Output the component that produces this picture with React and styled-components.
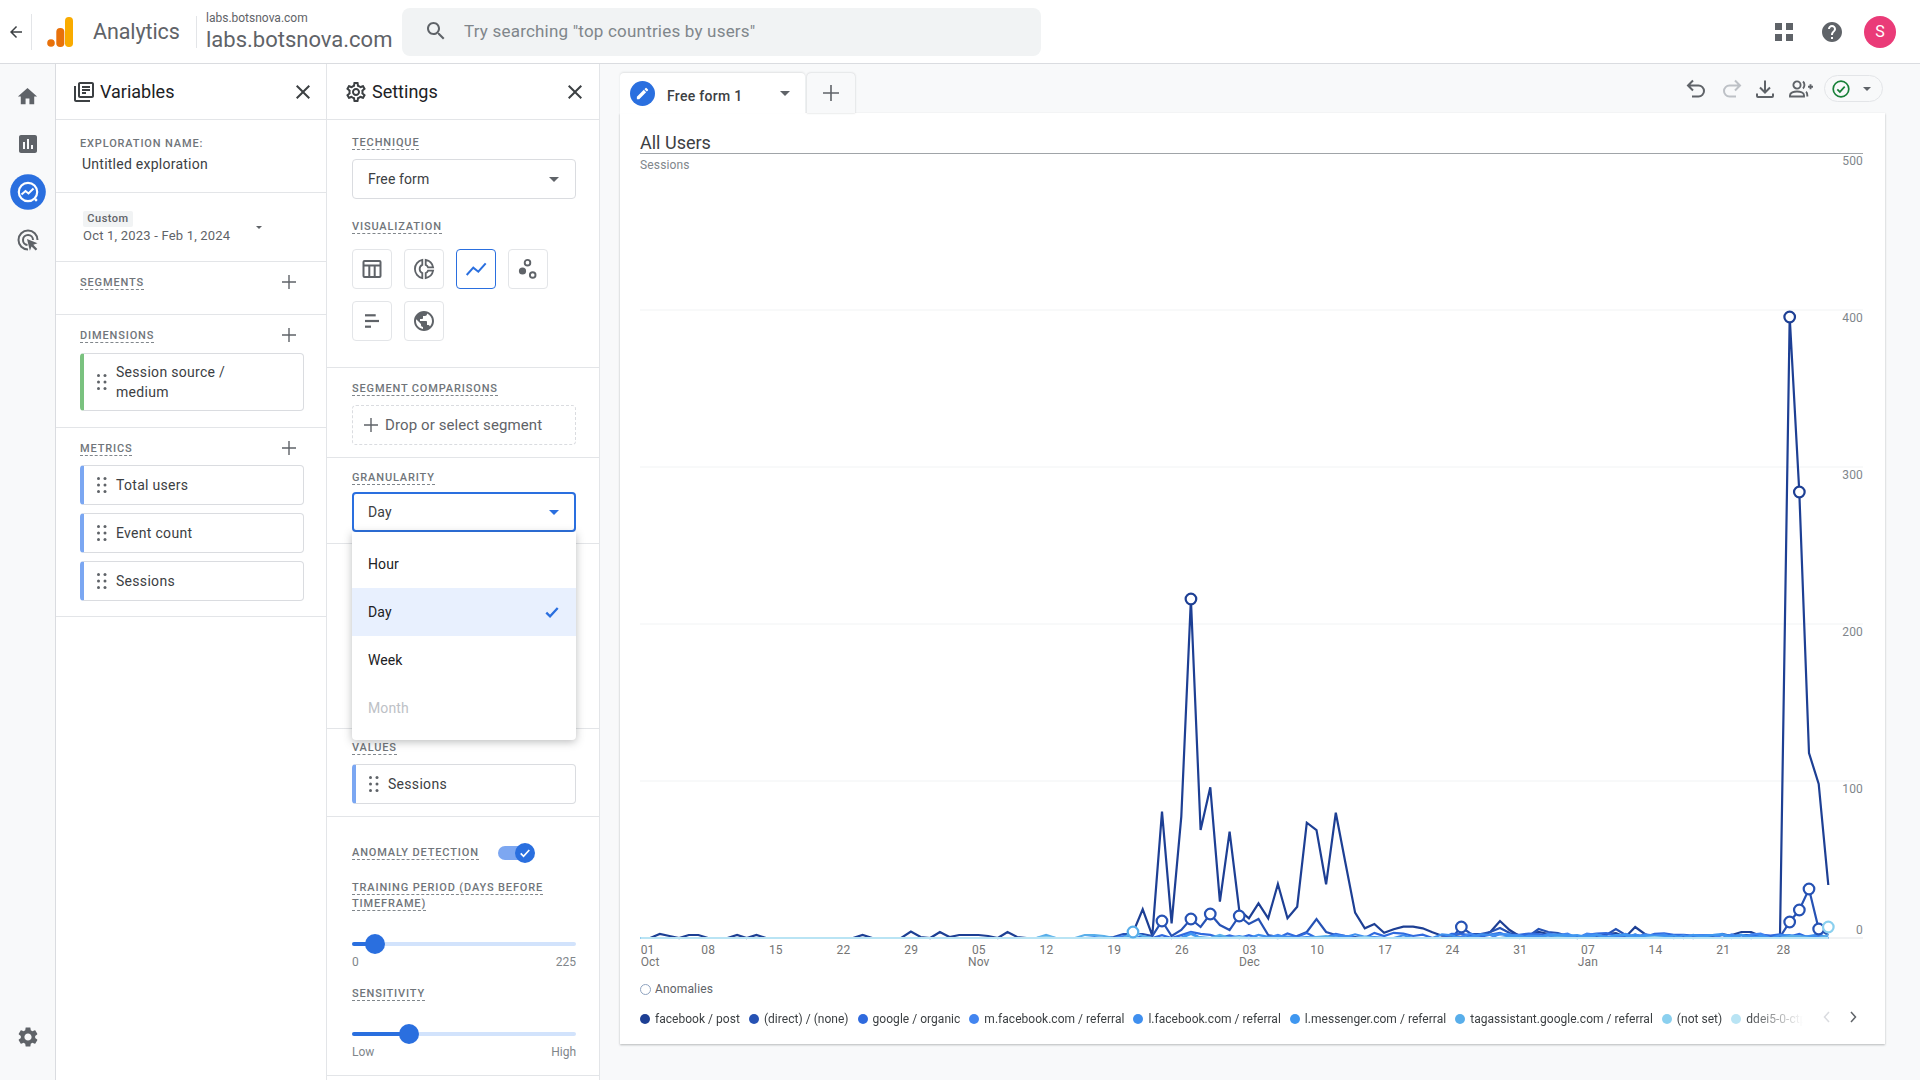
import React from "react";
import styled, { createGlobalStyle } from "styled-components";

const BLUE = "#2a6fdf";
const LINE = "#e3e5e8";
const GREY = "#5f6368";

const Global = createGlobalStyle`
  html, body { margin: 0; padding: 0; width: 1920px; height: 1080px; overflow: hidden; background: #f8f9fa; }
  body { font-family: Roboto, "Noto Sans", Arial, sans-serif; color: #3c4043; }
  * { box-sizing: border-box; }
`;

const Page = styled.div`display: flex; flex-direction: column; width: 1920px; height: 1080px;`;

/* ---------- header ---------- */
const Header = styled.header`
  display: flex; align-items: center; height: 64px; padding: 0 24px 0 7px;
  background: #fff; border-bottom: 1px solid #dadce0; flex: none;
`;
const BackSlot = styled.div`display: flex; width: 18px; height: 18px; color: #3c4043;`;
const VRule = styled.div`width: 1px; height: ${p => p.$h}px; background: #e3e5e8; margin-left: ${p => p.$ml}px;`;
const LogoSlot = styled.div`display: flex; margin-left: 15px; width: 26px; height: 30px;`;
const BrandText = styled.div`margin-left: 20px; width: 103px; font-size: 21.5px; color: ${GREY}; letter-spacing: -.1px; line-height: 28px; padding-top: 1px;`;
const DomainCol = styled.div`display: flex; flex-direction: column; margin-left: 9px; width: 196px; height: 48px; justify-content: center; padding-top: 2px;`;
const DomainSmall = styled.div`font-size: 12px; line-height: 14px; color: ${GREY};`;
const DomainBig = styled.div`font-size: 22px; line-height: 28px; color: ${GREY}; margin-top: 1px; white-space: nowrap;`;
const Search = styled.div`
  display: flex; align-items: center; width: 639px; height: 48px; background: #f1f3f4; border-radius: 8px;
  padding: 0 0 2px 22px; color: #80868b; font-size: 17px; letter-spacing: .2px;
`;
const SearchIcon = styled.svg`width: 24px; height: 24px; fill: ${GREY}; margin-right: 16px;`;
const HeadActions = styled.div`display: flex; align-items: center; margin-left: auto;`;
const Apps = styled.svg`width: 18px; height: 18px; fill: ${GREY};`;
const Help = styled.svg`width: 24px; height: 24px; fill: ${GREY}; margin-left: 27px;`;
const Avatar = styled.div`
  width: 32px; height: 32px; border-radius: 50%; background: #ea3b78; color: #fff; margin-left: 20px;
  display: flex; align-items: center; justify-content: center; font-size: 16px;
`;

/* ---------- shell ---------- */
const Shell = styled.div`display: flex; flex: 1; min-height: 0;`;
const Rail = styled.nav`
  width: 56px; flex: none; display: flex; flex-direction: column; padding: 8px 0 19px; border-right: 1px solid #dadce0; background: #f8f9fa;
`;
const RailItem = styled.div`height: 48px; display: flex; align-items: center; justify-content: center; margin-top: ${p => p.$bottom ? "auto" : 0};`;
const MatIcon = styled.svg`width: ${p => p.$s || 24}px; height: ${p => p.$s || 24}px; fill: ${p => p.$c || GREY}; flex: none;`;
const StrokeIcon = styled.svg`width: ${p => p.$s || 24}px; height: ${p => p.$s || 24}px; fill: none; stroke: ${p => p.$c || GREY}; stroke-width: ${p => p.$w || 2}; flex: none;`;

const Panel = styled.aside`
  width: ${p => p.$w}px; flex: none; background: #fff; border-right: 1px solid ${LINE}; display: flex; flex-direction: column;
`;
const PanelHead = styled.div`
  height: 56px; display: flex; align-items: center; padding: 0 ${p => p.$pr}px 0 ${p => p.$pl}px; gap: ${p => p.$gap}px;
  border-bottom: 1px solid ${LINE}; font-size: 18px; color: #202124; flex: none;
`;
const PanelTitle = styled.div`flex: 1;`;

const Section = styled.section`
  padding: ${p => p.$pt}px 23px ${p => p.$pb}px ${p => p.$pl ?? 25}px; flex: none; position: relative;
  border-bottom: 1px solid ${LINE};
`;
const Spacer = styled.div`height: ${p => p.$h}px; border-bottom: 1px solid ${LINE}; flex: none;`;

const LabelBlock = styled.div`
  font-size: 11px; line-height: 16px; font-weight: 500; letter-spacing: .85px; color: #70757a; text-transform: uppercase;
  margin-top: ${p => p.$mt || 0}px; position: relative; top: 1px;
`;
const LabelText = styled.span`padding-bottom: 0; border-bottom: 1px dashed #80868b;`;
const Label = ({ children, mt }) => <LabelBlock $mt={mt}><LabelText>{children}</LabelText></LabelBlock>;

const PlainLabel = styled.div`font-size: 11px; line-height: 14px; font-weight: 500; letter-spacing: .85px; color: #70757a;`;
const NameValue = styled.div`font-size: 14px; line-height: 16px; color: #3c4043; letter-spacing: .25px; margin: 5px 0 0 2px;`;

const DateRow = styled.div`display: flex; align-items: center; margin-left: 3px;`;
const DateBlock = styled.div`width: 173px;`;
const Badge = styled.div`
  height: 16px; line-height: 16px; width: 50px; background: #f1f3f4; border-radius: 2px;
  font-size: 11px; font-weight: 500; letter-spacing: .5px; color: ${GREY}; text-align: center;
`;
const DateText = styled.div`font-size: 13px; line-height: 16px; color: ${GREY}; letter-spacing: .2px; margin-top: 1px;`;
const Caret = styled.div`
  width: 0; height: 0; flex: none; border-left: ${p => p.$s || 5}px solid transparent; border-right: ${p => p.$s || 5}px solid transparent;
  border-top: ${p => p.$s || 5}px solid ${p => p.$c || GREY};
`;

const RowHead = styled.div`display: flex; align-items: center; justify-content: space-between; height: 16px; padding-right: 7px;`;
const ChipList = styled.div`display: flex; flex-direction: column; gap: 8px; margin-top: ${p => p.$mt}px;`;
const Chip = styled.div`
  display: flex; align-items: center; gap: 9px; min-height: 40px; width: 224px; padding: 8px 13px;
  background: #fff; border: 1px solid #dadce0; border-left: 4px solid ${p => p.$c}; border-radius: 4px;
  font-size: 14px; line-height: 20px; color: #3c4043; letter-spacing: .3px;
`;
const ChipText = styled.span`display: block;`;

const Select = styled.div`
  display: flex; align-items: center; justify-content: space-between; height: 40px; width: 224px; padding: 0 16px 0 15px;
  background: #fff; border: ${p => p.$active ? `2px solid ${BLUE}` : "1px solid #dadce0"}; border-radius: 4px;
  font-size: 14px; color: #3c4043; margin-top: ${p => p.$mt}px; letter-spacing: .1px;
  ${p => p.$active ? "padding-left: 14px; padding-right: 15px;" : ""}
`;
const VizGrid = styled.div`display: grid; grid-template-columns: repeat(4, 40px); gap: 12px; margin-top: 15px;`;
const VizButton = styled.div`
  width: 40px; height: 40px; display: flex; align-items: center; justify-content: center; border-radius: 4px;
  border: 1px solid ${p => p.$on ? BLUE : "#e3e5e8"}; background: #fff;
`;
const DropBox = styled.div`
  display: flex; align-items: center; gap: 7px; height: 40px; width: 224px; margin-top: 9px; padding-left: 11px;
  border: 1px dashed #dadce0; border-radius: 4px; font-size: 15px; color: ${GREY}; letter-spacing: .1px;
`;

const SelectWrap = styled.div`position: relative; width: 224px;`;
const Menu = styled.div`
  position: absolute; left: 0; top: 100%; width: 100%; background: #fff; padding: 8px 0; z-index: 5;
  border-radius: 0 0 4px 4px; box-shadow: 0 2px 8px rgba(60,64,67,.35);
`;
const MenuOption = styled.div`
  display: flex; align-items: center; justify-content: space-between; height: 48px; padding: 0 16px;
  font-size: 14px; letter-spacing: .1px; color: ${p => p.$off ? "#bdc1c6" : "#202124"}; background: ${p => p.$sel ? "#e8f0fe" : "#fff"};
`;

const ToggleRow = styled.div`display: flex; align-items: center; height: 20px; gap: 20px;`;
const Toggle = styled.div`
  position: relative; width: 36px; height: 14px; border-radius: 7px; background: #7da7f1; margin-top: 2px; margin-left: -1px;
`;
const ToggleKnob = styled.div`
  position: absolute; right: -1px; top: -3px; width: 20px; height: 20px; border-radius: 50%; background: ${BLUE};
  display: flex; align-items: center; justify-content: center;
`;
const Track = styled.div`position: relative; height: 20px; width: 224px; margin-top: 23px;`;
const TrackBase = styled.div`position: absolute; left: 0; right: 0; top: 8px; height: 4px; background: #d2e3fc; border-radius: 2px;`;
const TrackFill = styled.div`position: absolute; left: 0; top: 8px; height: 4px; background: ${BLUE}; border-radius: 2px;`;
const Thumb = styled.div`position: absolute; top: 0; width: 20px; height: 20px; margin-left: -10px; border-radius: 50%; background: ${BLUE};`;
const RangeRow = styled.div`display: flex; justify-content: space-between; font-size: 12px; line-height: 14px; color: #80868b; margin-top: 1px; width: 224px;`;

/* ---------- main ---------- */
const Main = styled.main`flex: 1; min-width: 0; padding: 9px 35px 0 20px; background: #f8f9fa;`;
const TabRow = styled.div`display: flex; height: 40px;`;
const Tab = styled.div`
  display: flex; align-items: center; width: 185px; height: 40px; padding: 0 15px 0 10px; background: #fff;
  border-radius: 4px 4px 0 0; box-shadow: 0 -1px 2px rgba(60,64,67,.12); font-size: 14px; font-weight: 500; color: #3c4043; letter-spacing: .3px;
`;
const TabBadge = styled.div`
  width: 25px; height: 25px; border-radius: 50%; background: ${BLUE}; display: flex; align-items: center; justify-content: center; margin-right: 12px;
`;
const TabName = styled.div`flex: 1; padding-top: 5px;`;
const AddTab = styled.div`
  width: 48px; margin-left: 2px; height: 40px; display: flex; align-items: center; justify-content: center; background: #f8f9fa;
  border-radius: 4px 4px 0 0; box-shadow: 0 0 2px rgba(60,64,67,.3);
`;
const Toolbar = styled.div`display: flex; align-items: flex-start; margin-left: auto; margin-right: 2px; height: 40px;`;
const ToolSlot = styled.div`display: flex; justify-content: center; width: ${p => p.$w || 24}px; margin-left: ${p => p.$ml}px; padding-top: 4px;`;
const StatusPill = styled.div`
  display: flex; align-items: center; width: 59px; height: 27px; margin: 2px 0 0 9px; padding: 0 11px 0 7px; justify-content: space-between;
  border: 1px solid #e3e5e8; border-radius: 14px;
`;

const Card = styled.div`
  height: 931px; padding: 0 22px 0 20px; background: #fff; box-shadow: 0 1px 2px rgba(60,64,67,.35);
`;
const CardTitle = styled.div`
  height: 41px; padding-top: 20px; font-size: 18px; line-height: 20px; color: #3c4043; border-bottom: 1px solid #a0a4a8;
`;
const ChartSvg = styled.svg`display: block; width: 1223px; height: 821px; overflow: visible;`;
const AxisText = styled.text`font-size: 12px; fill: ${p => p.$c || "#757575"}; font-family: Roboto, sans-serif; letter-spacing: .15px;`;
const AnomalyRow = styled.div`display: flex; align-items: center; gap: 4px; height: 14px; margin-top: 7px; font-size: 12px; color: ${GREY}; letter-spacing: .15px;`;
const AnomalyDot = styled.div`width: 11px; height: 11px; border: 1.5px solid #8fa3c0; border-radius: 50%;`;
const LegendRow = styled.div`display: flex; align-items: center; height: 14px; margin-top: 16px;`;
const Legend = styled.div`
  display: flex; gap: 9px; width: 1163px; white-space: nowrap;
  -webkit-mask-image: linear-gradient(to right, #000 calc(100% - 56px), transparent 100%);
  mask-image: linear-gradient(to right, #000 calc(100% - 56px), transparent 100%);
`;
const LegendItem = styled.div`display: flex; align-items: center; gap: 5px; flex: none; font-size: 12px; line-height: 14px; color: #3c4043; letter-spacing: .03px;`;
const LegendDot = styled.span`width: 10px; height: 10px; border-radius: 50%; background: ${p => p.$c}; flex: none;`;
const Pager = styled.div`display: flex; gap: 16px; margin-left: auto; padding-right: 5px; margin-top: -4px;`;
const PagerIcon = styled.svg`width: 10px; height: 16px; fill: none; stroke: ${p => p.$c}; stroke-width: 1.5;`;
const DragIcon = styled.svg`width: 10px; height: 16px; fill: ${GREY}; flex: none;`;

/* ---------- icons ---------- */
const P = {
  back: "M20 11H7.83l5.59-5.59L12 4l-8 8 8 8 1.41-1.41L7.83 13H20v-2z",
  search: "M15.5 14h-.79l-.28-.27C15.41 12.59 16 11.11 16 9.5 16 5.91 13.09 3 9.5 3S3 5.91 3 9.5 5.91 16 9.5 16c1.61 0 3.09-.59 4.23-1.57l.27.28v.79l5 4.99L20.49 19l-4.99-5zm-6 0C7.01 14 5 11.99 5 9.5S7.01 5 9.5 5 14 7.01 14 9.5 11.99 14 9.5 14z",
  home: "M10 20v-6h4v6h5v-8h3L12 3 2 12h3v8z",
  bars: "M19 3H5c-1.1 0-2 .9-2 2v14c0 1.1.9 2 2 2h14c1.1 0 2-.9 2-2V5c0-1.1-.9-2-2-2zM9 17H7v-7h2v7zm4 0h-2V7h2v10zm4 0h-2v-4h2v4z",
  gear: "M19.14 12.94c.04-.3.06-.61.06-.94 0-.32-.02-.64-.07-.94l2.03-1.58c.18-.14.23-.41.12-.61l-1.92-3.32c-.12-.22-.37-.29-.59-.22l-2.39.96c-.5-.38-1.03-.7-1.62-.94l-.36-2.54c-.04-.24-.24-.41-.48-.41h-3.84c-.24 0-.43.17-.47.41l-.36 2.54c-.59.24-1.13.57-1.62.94l-2.39-.96c-.22-.08-.47 0-.59.22L2.74 8.87c-.12.21-.08.47.12.61l2.03 1.58c-.05.3-.09.63-.09.94s.02.64.07.94l-2.03 1.58c-.18.14-.23.41-.12.61l1.92 3.32c.12.22.37.29.59.22l2.39-.96c.5.38 1.03.7 1.62.94l.36 2.54c.05.24.24.41.48.41h3.84c.24 0 .44-.17.47-.41l.36-2.54c.59-.24 1.13-.56 1.62-.94l2.39.96c.22.08.47 0 .59-.22l1.92-3.32c.12-.22.07-.47-.12-.61l-2.01-1.58zM12 15.6c-1.98 0-3.6-1.62-3.6-3.6s1.62-3.6 3.6-3.6 3.6 1.62 3.6 3.6-1.62 3.6-3.6 3.6z",
  gearOutline: "M19.43 12.98c.04-.32.07-.64.07-.98 0-.34-.03-.66-.07-.98l2.11-1.65c.19-.15.24-.42.12-.64l-2-3.46c-.09-.16-.26-.25-.44-.25-.06 0-.12.01-.17.03l-2.49 1c-.52-.4-1.08-.73-1.69-.98l-.38-2.65C14.46 2.18 14.25 2 14 2h-4c-.25 0-.46.18-.49.42l-.38 2.65c-.61.25-1.17.59-1.69.98l-2.49-1c-.06-.02-.12-.03-.18-.03-.17 0-.34.09-.43.25l-2 3.46c-.13.22-.07.49.12.64l2.11 1.65c-.04.32-.07.65-.07.98 0 .33.03.66.07.98l-2.11 1.65c-.19.15-.24.42-.12.64l2 3.46c.09.16.26.25.44.25.06 0 .12-.01.17-.03l2.49-1c.52.4 1.08.73 1.69.98l.38 2.65c.03.24.24.42.49.42h4c.25 0 .46-.18.49-.42l.38-2.65c.61-.25 1.17-.59 1.69-.98l2.49 1c.06.02.12.03.18.03.17 0 .34-.09.43-.25l2-3.46c.12-.22.07-.49-.12-.64l-2.11-1.65zm-1.98-1.71c.04.31.05.52.05.73 0 .21-.02.43-.05.73l-.14 1.13.89.7 1.08.84-.7 1.21-1.27-.51-1.04-.42-.9.68c-.43.32-.84.56-1.25.73l-1.06.43-.16 1.13-.2 1.35h-1.4l-.19-1.35-.16-1.13-1.06-.43c-.43-.18-.83-.41-1.23-.71l-.91-.7-1.06.43-1.27.51-.7-1.21 1.08-.84.89-.7-.14-1.13c-.03-.31-.05-.54-.05-.74s.02-.43.05-.73l.14-1.13-.89-.7-1.08-.84.7-1.21 1.27.51 1.04.42.9-.68c.43-.32.84-.56 1.25-.73l1.06-.43.16-1.13.2-1.35h1.39l.19 1.35.16 1.13 1.06.43c.43.18.83.41 1.23.71l.91.7 1.06-.43 1.27-.51.7 1.21-1.07.85-.89.7.14 1.13zM12 8c-2.21 0-4 1.79-4 4s1.79 4 4 4 4-1.79 4-4-1.79-4-4-4zm0 6c-1.1 0-2-.9-2-2s.9-2 2-2 2 .9 2 2-.9 2-2 2z",
  close: "M19 6.41L17.59 5 12 10.59 6.41 5 5 6.41 10.59 12 5 17.59 6.41 19 12 13.41 17.59 19 19 17.59 13.41 12z",
  library: "M4 6H2v14c0 1.1.9 2 2 2h14v-2H4V6zm16-4H8c-1.1 0-2 .9-2 2v12c0 1.1.9 2 2 2h12c1.1 0 2-.9 2-2V4c0-1.1-.9-2-2-2zm0 14H8V4h12v12zM10 9h8v2h-8zm0 3h4v2h-4zm0-6h8v2h-8z",
  help: "M12 2C6.48 2 2 6.48 2 12s4.48 10 10 10 10-4.48 10-10S17.52 2 12 2zm1 17h-2v-2h2v2zm2.07-7.75l-.9.92C13.45 12.9 13 13.5 13 15h-2v-.5c0-1.1.45-2.1 1.17-2.83l1.24-1.26c.37-.36.59-.86.59-1.41 0-1.1-.9-2-2-2s-2 .9-2 2H8c0-2.21 1.79-4 4-4s4 1.79 4 4c0 .88-.36 1.68-.93 2.25z",
  globe: "M12 2C6.48 2 2 6.48 2 12s4.48 10 10 10 10-4.48 10-10S17.52 2 12 2zm-1 17.93c-3.95-.49-7-3.85-7-7.93 0-.62.08-1.21.21-1.79L9 15v1c0 1.1.9 2 2 2v1.93zm6.9-2.54c-.26-.81-1-1.39-1.9-1.39h-1v-3c0-.55-.45-1-1-1H8v-2h2c.55 0 1-.45 1-1V7h2c1.1 0 2-.9 2-2v-.41c2.93 1.19 5 4.06 5 7.41 0 2.08-.8 3.97-2.1 5.39z",
  pencil: "M3 17.25V21h3.75L17.81 9.94l-3.75-3.75L3 17.25zM20.71 7.04a1 1 0 0 0 0-1.41l-2.34-2.34a1 1 0 0 0-1.41 0l-1.83 1.83 3.75 3.75 1.83-1.83z",
};
const Mat = ({ d, s, c }) => <MatIcon viewBox="0 0 24 24" $s={s} $c={c}><path d={d} /></MatIcon>;
const Plus = ({ s = 14, c = GREY }) => (
  <StrokeIcon viewBox="0 0 14 14" $s={s} $c={c} $w={1.4}><path d="M7 0v14M0 7h14" /></StrokeIcon>
);
const Drag = () => (
  <DragIcon viewBox="0 0 10 16">
    {[1.5, 8, 14.5].map(y => [1.5, 8].map(x => <circle key={`${x}${y}`} cx={x} cy={y} r="1.5" />))}
  </DragIcon>
);
const Logo = () => (
  <svg viewBox="0 0 26 30" width="26" height="30">
    <circle cx="4" cy="26" r="3.8" fill="#e8710a" />
    <rect x="9.3" y="11" width="8" height="19" rx="3.8" fill="#e8710a" />
    <rect x="18" y="0" width="8" height="30" rx="3.8" fill="#f9ab00" />
  </svg>
);
const ExploreIcon = () => (
  <svg viewBox="0 0 36 36" width="36" height="36">
    <circle cx="18" cy="18" r="17.8" fill={BLUE} />
    <circle cx="18" cy="18" r="9.2" fill="none" stroke="#fff" strokeWidth="2.2" />
    <path d="M11.5 20.5l4-3.5 3 2.5 5-5" fill="none" stroke="#fff" strokeWidth="2" />
    <circle cx="26" cy="26" r="1.4" fill="#fff" />
  </svg>
);
const AdsIcon = () => (
  <svg viewBox="0 0 24 24" width="24" height="24" fill="none" stroke={GREY}>
    <path d="M12 21.5A9.5 9.5 0 1 1 21.5 12" strokeWidth="2" />
    <path d="M11.5 17a5 5 0 1 1 5.5-5" strokeWidth="2" />
    <path d="M11 11l10.5 4.2-4.2 1.6 4 4.2-1.6 1.6-4.2-4-1.6 4.2z" fill={GREY} stroke="none" />
  </svg>
);
const Check = ({ c = "#fff", s = 14, w = 2 }) => (
  <StrokeIcon viewBox="0 0 14 14" $s={s} $c={c} $w={w}><path d="M2 7.5l3.3 3.3L12 3.5" /></StrokeIcon>
);
const PersonAdd = () => (
  <svg viewBox="0 0 26 24" width="26" height="24" fill="none" stroke={GREY} strokeWidth="1.9">
    <circle cx="9" cy="8" r="3.6" />
    <path d="M2 19.5v-1.2c0-2.6 3.8-3.8 7-3.8s7 1.2 7 3.8v1.2z" />
    <path d="M15 4.6c1.9 1.6 1.9 5.2 0 6.8M18 14.8c1 .7 1.3 1.6 1.3 3.5v1.2" />
    <path d="M20 9.8h5M22.5 7.3v5" />
  </svg>
);

/* ---------- chart data ---------- */
const N = 124;
const X = d => 640.5 + d * 9.657;
const Y = h => 938 - h;
const sparse = m => Array.from({ length: N }, (_, d) => m[d] ?? 0);
const wobble = (seed, amp, from, to, base = {}) => {
  const out = { ...base };
  for (let d = from; d <= to; d++) {
    const v = Math.sin(d * 12.9898 + seed) * 43758.5453;
    out[d] = out[d] ?? Math.max(0, (v - Math.floor(v)) * amp - amp * 0.25);
  }
  return out;
};
const points = arr => arr.map((h, d) => `${X(d).toFixed(1)},${Y(h).toFixed(1)}`).join(" ");

const dark = sparse({
  2: 4, 3: 2, 5: 3, 6: 3, 10: 3, 12: 3, 23: 3, 28: 6.5, 29: 1, 31: 6, 32: 1, 33: 3, 34: 3, 35: 3, 36: 2, 38: 6, 39: 1,
  50: 1, 51: 5.3, 52: 28.7, 53: 2.3, 54: 126.3, 55: 14.7, 56: 121.3, 57: 339, 58: 108, 59: 150.7, 60: 36.3, 61: 106.3, 62: 28, 63: 19.7, 64: 34.7,
  65: 19.7, 66: 54, 67: 19.7, 68: 31.3, 69: 115.3, 70: 108, 71: 53.7, 72: 125.3, 73: 74.7, 74: 25.3, 75: 9.7, 76: 14, 77: 5.3, 78: 8.7,
  79: 11.3, 80: 11.3, 81: 9.7, 82: 5.7, 83: 2.3, 84: 2.3, 85: 4, 86: 1, 87: 2, 88: 6, 89: 17, 90: 8, 91: 2, 92: 3, 93: 6, 94: 4, 95: 2, 96: 1, 97: 1,
  98: 1, 99: 1, 100: 4, 101: 5, 102: 1, 103: 11, 104: 4, 107: 1, 108: 2, 109: 1, 110: 2, 111: 1, 112: 3, 113: 3, 114: 6, 115: 6, 116: 2, 117: 1, 118: 2,
  119: 621, 120: 446, 121: 185, 122: 154, 123: 53,
});
const direct = sparse({
  49: 1, 50: 4, 51: 4, 52: 4, 53: 2, 54: 17, 55: 2, 56: 8, 57: 19, 58: 11, 59: 24, 60: 13, 61: 8, 62: 22, 63: 14, 64: 19, 65: 3, 66: 1, 67: 1, 68: 2, 69: 6,
  70: 19, 71: 6, 72: 3, 73: 2, 74: 1, 85: 11, 86: 4, 87: 4, 88: 6, 89: 10, 90: 5, 91: 3, 92: 2, 93: 9, 94: 6, 95: 5, 96: 2, 100: 3, 101: 9, 102: 3, 103: 1, 104: 1,
  108: 2, 112: 4, 113: 2, 114: 3, 115: 3, 116: 2, 118: 1, 119: 16, 120: 28, 121: 49, 122: 9, 123: 3,
});
const organic = sparse(wobble(1.7, 7, 52, 122, { 57: 6, 72: 4, 80: 2, 89: 5 }));
const mfb = sparse(wobble(4.2, 6, 84, 122, { 50: 2, 57: 5, 66: 3, 72: 3, 73: 2 }));
const lfb = sparse(wobble(7.9, 5, 60, 122, { 42: 1, 47: 1, 62: 2 }));
const lms = sparse(wobble(2.3, 5, 90, 122, { 57: 4, 60: 2 }));
const tag = sparse({ 42: 3, 46: 3, 47: 3, 48: 2, 51: 6, 52: 2, 58: 1, 60: 3, 70: 1, 71: 2, 95: 1, 119: 2, 120: 2, 123: 3 });
const notSet = sparse({ 42: 1, 62: 1, 75: 1, 105: 1 });
const ddei = sparse({});

const SERIES = [
  { name: "facebook / post", c: "#1d3f94", data: dark, marks: [57, 119, 120] },
  { name: "(direct) / (none)", c: "#2652b4", data: direct, marks: [54, 57, 59, 62, 85, 119, 120, 121, 122] },
  { name: "google / organic", c: "#2f6ade", data: organic, marks: [] },
  { name: "m.facebook.com / referral", c: "#4285f0", data: mfb, marks: [] },
  { name: "l.facebook.com / referral", c: "#3f8fef", data: lfb, marks: [] },
  { name: "l.messenger.com / referral", c: "#3f97f0", data: lms, marks: [] },
  { name: "tagassistant.google.com / referral", c: "#58aeea", data: tag, marks: [51] },
  { name: "(not set)", c: "#8bd0ef", data: notSet, marks: [] },
  { name: "ddei5-0-ctp", c: "#b9e4f4", data: ddei, marks: [] },
];
const EXTRA_MARK = { d: 123, h: 11, c: "#8bd0ef" };
const Y_TICKS = [500, 400, 300, 200, 100, 0];
const X_TICKS = [
  ["01", 640.7, "Oct", "start"], ["08", 708.2], ["15", 775.8], ["22", 843.5], ["29", 911.2], ["05", 978.8, "Nov"], ["12", 1046.5], ["19", 1114.2],
  ["26", 1181.9], ["03", 1249.5, "Dec"], ["10", 1317.2], ["17", 1384.9], ["24", 1452.5], ["31", 1520.2], ["07", 1587.9, "Jan"], ["14", 1655.5], ["21", 1723.2], ["28", 1783.5],
];

const Chart = () => (
  <ChartSvg viewBox="640 154 1223 821">
    <AxisText x="640" y="169" $c="#80868b">Sessions</AxisText>
    {Y_TICKS.map(v => {
      const gy = 938 - v * 1.57;
      return (
        <g key={v}>
          {v !== 500 && <line x1="640" x2="1863" y1={gy} y2={gy} stroke={v === 0 ? "#e3e5e8" : "#f1f3f4"} />}
          <AxisText x="1863" y={v === 0 ? gy - 4 : gy + 11.5} textAnchor="end" $c="#80868b">{v}</AxisText>
        </g>
      );
    })}
    {X_TICKS.map(([t, x, m, a]) => (
      <g key={`${t}${x}`}>
        <AxisText x={x} y="954" textAnchor={a || "middle"}>{t}</AxisText>
        {m && <AxisText x={x} y="966" textAnchor={a || "middle"}>{m}</AxisText>}
      </g>
    ))}
    {SERIES.map(s => (
      <polyline key={s.name} points={points(s.data)} fill="none" stroke={s.c} strokeWidth="2.2" strokeLinejoin="miter" />
    ))}
    {SERIES.flatMap(s => s.marks.map(d => (
      <circle key={`${s.name}${d}`} cx={X(d)} cy={Y(s.data[d])} r="5.3" fill="#fff" stroke={s.c} strokeWidth="2.2" />
    )))}
    <circle cx={X(EXTRA_MARK.d)} cy={Y(EXTRA_MARK.h)} r="5.3" fill="#fff" stroke={EXTRA_MARK.c} strokeWidth="2.2" />
  </ChartSvg>
);

/* ---------- app ---------- */
export default function App() {
  return (
    <Page>
      <Global />
      <Header>
        <BackSlot><Mat d={P.back} s={18} c="#3c4043" /></BackSlot>
        <VRule $h={36} $ml={6} />
        <LogoSlot><Logo /></LogoSlot>
        <BrandText>Analytics</BrandText>
        <VRule $h={32} $ml={0} />
        <DomainCol>
          <DomainSmall>labs.botsnova.com</DomainSmall>
          <DomainBig>labs.botsnova.com</DomainBig>
        </DomainCol>
        <Search>
          <SearchIcon viewBox="0 0 24 24"><path d={P.search} /></SearchIcon>
          Try searching "top countries by users"
        </Search>
        <HeadActions>
          <Apps viewBox="0 0 18 18"><rect width="7" height="7" /><rect x="11" width="7" height="7" /><rect y="11" width="7" height="7" /><rect x="11" y="11" width="7" height="7" /></Apps>
          <Help viewBox="0 0 24 24"><path d={P.help} /></Help>
          <Avatar>S</Avatar>
        </HeadActions>
      </Header>
      <Shell>
        <Rail>
          <RailItem><Mat d={P.home} s={23} /></RailItem>
          <RailItem><Mat d={P.bars} s={24} /></RailItem>
          <RailItem><ExploreIcon /></RailItem>
          <RailItem><AdsIcon /></RailItem>
          <RailItem $bottom><Mat d={P.gear} s={24} /></RailItem>
        </Rail>

        <Panel $w={271}>
          <PanelHead $pl={16} $pr={11} $gap={4}>
            <Mat d={P.library} c="#3c4043" />
            <PanelTitle>Variables</PanelTitle>
            <Mat d={P.close} c="#3c4043" />
          </PanelHead>
          <Section $pt={17} $pb={20} $pl={24}>
            <PlainLabel>EXPLORATION NAME:</PlainLabel>
            <NameValue>Untitled exploration</NameValue>
          </Section>
          <Section $pt={18} $pb={17} $pl={24}>
            <DateRow>
              <DateBlock>
                <Badge>Custom</Badge>
                <DateText>Oct 1, 2023 - Feb 1, 2024</DateText>
              </DateBlock>
              <Caret $s={3.5} />
            </DateRow>
          </Section>
          <Section $pt={12} $pb={24} $pl={24}>
            <RowHead><Label>Segments</Label><Plus /></RowHead>
          </Section>
          <Section $pt={12} $pb={16} $pl={24}>
            <RowHead><Label>Dimensions</Label><Plus /></RowHead>
            <ChipList $mt={10}>
              <Chip $c="#7ac27f"><Drag /><ChipText>Session source /<br />medium</ChipText></Chip>
            </ChipList>
          </Section>
          <Section $pt={12} $pb={15} $pl={24}>
            <RowHead><Label>Metrics</Label><Plus /></RowHead>
            <ChipList $mt={9}>
              <Chip $c="#7ba7f2"><Drag />Total users</Chip>
              <Chip $c="#7ba7f2"><Drag />Event count</Chip>
              <Chip $c="#7ba7f2"><Drag />Sessions</Chip>
            </ChipList>
          </Section>
        </Panel>

        <Panel $w={273}>
          <PanelHead $pl={17} $pr={12} $gap={4}>
            <Mat d={P.gearOutline} c="#3c4043" />
            <PanelTitle>Settings</PanelTitle>
            <Mat d={P.close} c="#3c4043" />
          </PanelHead>
          <Section $pt={14} $pb={26}>
            <Label>Technique</Label>
            <Select $mt={9}>Free form<Caret /></Select>
            <Label mt={19}>Visualization</Label>
            <VizGrid>
              <VizButton>
                <StrokeIcon viewBox="0 0 24 24" $w={2}><rect x="3.5" y="4" width="17" height="16" rx="1" /><path d="M3.5 8.5h17M9.3 8.5V20M14.7 8.5V20" /></StrokeIcon>
              </VizButton>
              <VizButton>
                <StrokeIcon viewBox="0 0 24 24" $w={1.8}>
                  <path d="M10.3 2.9A9.3 9.3 0 0 0 10.3 21.100V16.100A4.500 4.500 0 0 1 10.300 7.900z" />
                  <path d="M13.700 2.900A9.300 9.300 0 0 1 21.100 10.300H16.100A4.500 4.500 0 0 0 13.700 7.900z" />
                  <path d="M21.100 13.700A9.300 9.300 0 0 1 13.700 21.100V16.100A4.500 4.500 0 0 0 16.100 13.700z" />
                </StrokeIcon>
              </VizButton>
              <VizButton $on>
                <StrokeIcon viewBox="0 0 24 24" $c={BLUE} $w={2}><path d="M2.7 18l6.600-7.300 5 4 7.400-8.400" /></StrokeIcon>
              </VizButton>
              <VizButton>
                <MatIcon viewBox="0 0 24 24">
                  <circle cx="11.5" cy="5.7" r="2.8" fill="none" stroke={GREY} strokeWidth="1.9" />
                  <circle cx="6.5" cy="14" r="3.6" />
                  <circle cx="16.7" cy="18" r="2.8" fill="none" stroke={GREY} strokeWidth="1.9" />
                </MatIcon>
              </VizButton>
              <VizButton>
                <MatIcon viewBox="0 0 24 24"><rect x="5" y="5.2" width="10.7" height="2.2" /><rect x="5" y="10.900" width="14" height="2.2" /><rect x="5" y="16.600" width="6" height="2.2" /></MatIcon>
              </VizButton>
              <VizButton><Mat d={P.globe} /></VizButton>
            </VizGrid>
          </Section>
          <Section $pt={12} $pb={12}>
            <Label>Segment comparisons</Label>
            <DropBox><Plus />Drop or select segment</DropBox>
          </Section>
          <Section $pt={11} $pb={11}>
            <Label>Granularity</Label>
            <SelectWrap>
              <Select $mt={7} $active>Day<Caret $c={BLUE} /></Select>
              <Menu>
                <MenuOption>Hour</MenuOption>
                <MenuOption $sel>Day<Check c={BLUE} s={16} /></MenuOption>
                <MenuOption>Week</MenuOption>
                <MenuOption $off>Month</MenuOption>
              </Menu>
            </SelectWrap>
          </Section>
          <Spacer $h={185} />
          <Section $pt={10} $pb={12}>
            <Label>Values</Label>
            <ChipList $mt={9}>
              <Chip $c="#7ba7f2"><Drag />Sessions</Chip>
            </ChipList>
          </Section>
          <Section $pt={25} $pb={16}>
            <ToggleRow>
              <Label>Anomaly detection</Label>
              <Toggle><ToggleKnob><Check s={12} /></ToggleKnob></Toggle>
            </ToggleRow>
            <Label mt={17}>Training period (days before timeframe)</Label>
            <Track>
              <TrackBase />
              <TrackFill style={{ width: "10%" }} />
              <Thumb style={{ left: "10.3%" }} />
            </Track>
            <RangeRow><span>0</span><span>225</span></RangeRow>
            <Label mt={16}>Sensitivity</Label>
            <Track>
              <TrackBase />
              <TrackFill style={{ width: "25%" }} />
              <Thumb style={{ left: "25.4%" }} />
            </Track>
            <RangeRow><span>Low</span><span>High</span></RangeRow>
          </Section>
        </Panel>

        <Main>
          <TabRow>
            <Tab>
              <TabBadge><Mat d={P.pencil} s={15} c="#fff" /></TabBadge>
              <TabName>Free form 1</TabName>
              <Caret />
            </Tab>
            <AddTab><Plus s={16} /></AddTab>
            <Toolbar>
              <ToolSlot $ml={0}>
                <StrokeIcon viewBox="0 0 24 24" $w={2}><path d="M9 13.5L4 8.5l5-5M4.5 8.5h10a5 5 0 0 1 0 11H8" /></StrokeIcon>
              </ToolSlot>
              <ToolSlot $ml={12}>
                <StrokeIcon viewBox="0 0 24 24" $w={2} $c="#bdc1c6"><path d="M15 13.5l5-5-5-5M19.5 8.5h-10a5 5 0 0 0 0 11H16" /></StrokeIcon>
              </ToolSlot>
              <ToolSlot $ml={9}>
                <StrokeIcon viewBox="0 0 24 24" $w={2}><path d="M12 3.5v12M7 10.5l5 5 5-5M4 16.5V19a1 1 0 0 0 1 1h14a1 1 0 0 0 1-1v-2.5" /></StrokeIcon>
              </ToolSlot>
              <ToolSlot $ml={10} $w={28}><PersonAdd /></ToolSlot>
              <StatusPill>
                <StrokeIcon viewBox="0 0 18 18" $s={18} $c="#188038" $w={1.7}><circle cx="9" cy="9" r="7.8" /><path d="M5.3 9.3l2.6 2.6 4.8-5.2" /></StrokeIcon>
                <Caret $s={4} />
              </StatusPill>
            </Toolbar>
          </TabRow>
          <Card>
            <CardTitle>All Users</CardTitle>
            <Chart />
            <AnomalyRow><AnomalyDot />Anomalies</AnomalyRow>
            <LegendRow>
              <Legend>
                {SERIES.map(s => (
                  <LegendItem key={s.name}><LegendDot $c={s.c} />{s.name}</LegendItem>
                ))}
              </Legend>
              <Pager>
                <PagerIcon viewBox="0 0 10 16" $c="#dadce0"><path d="M7 3L2.5 8 7 13" /></PagerIcon>
                <PagerIcon viewBox="0 0 10 16" $c={GREY}><path d="M3 3l4.5 5L3 13" /></PagerIcon>
              </Pager>
            </LegendRow>
          </Card>
        </Main>
      </Shell>
    </Page>
  );
}
